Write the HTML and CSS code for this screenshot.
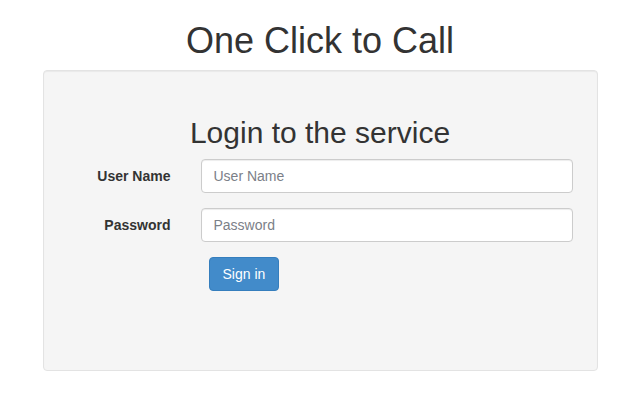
FILE: index.html
```html
<!DOCTYPE html>
<html>
<head>
<meta charset="utf-8">
<title>One Click to Call</title>
<link rel="stylesheet" href="styles.css">
</head>
<body>
<h1 class="title">One Click to Call</h1>
<div class="well">
  <h2 class="subtitle">Login to the service</h2>
  <form class="form">
    <div class="row">
      <label class="label" for="user">User Name</label>
      <input class="input" id="user" type="text" placeholder="User Name">
    </div>
    <div class="row">
      <label class="label" for="pass">Password</label>
      <input class="input" id="pass" type="password" placeholder="Password">
    </div>
    <div class="row row-btn">
      <button class="btn" type="button">Sign in</button>
    </div>
  </form>
</div>
</body>
</html>
```
FILE: styles.css
```css
* { box-sizing: border-box; }
html, body {
  margin: 0;
  padding: 0;
  background: #fff;
  font-family: "Liberation Sans", Arial, sans-serif;
  font-size: 14px;
  color: #333;
}
.title {
  margin: 21px 0 9px;
  font-size: 36px;
  font-weight: 500;
  line-height: 40px;
  text-align: center;
}
.well {
  width: 555px;
  height: 301px;
  margin: 0 auto;
  background: #f5f5f5;
  border: 1px solid #e3e3e3;
  border-radius: 4px;
  box-shadow: inset 0 1px 1px rgba(0,0,0,.05);
  padding: 45px 0 0;
}
.subtitle {
  margin: 0 0 10px;
  font-size: 30px;
  font-weight: 500;
  line-height: 33px;
  text-align: center;
}
.form { margin: 0; }
.row {
  display: flex;
  align-items: flex-start;
  margin-bottom: 15px;
}
.label {
  width: 127px;
  margin-right: 30px;
  padding-top: 7px;
  line-height: 20px;
  font-weight: bold;
  text-align: right;
}
.input {
  width: 372px;
  height: 34px;
  padding: 6px 12px;
  font-family: inherit;
  font-size: 14px;
  line-height: 20px;
  color: #555;
  background: #fff;
  border: 1px solid #ccc;
  border-radius: 4px;
  box-shadow: inset 0 1px 1px rgba(0,0,0,.075);
  outline: none;
}
.input::placeholder { color: #7b8088; }
.row-btn { padding-left: 165px; }
.btn {
  height: 34px;
  padding: 6px 13px;
  font-family: inherit;
  font-size: 14px;
  line-height: 20px;
  color: #fff;
  background: #428bca;
  border: 1px solid #357ebd;
  border-radius: 4px;
  cursor: pointer;
}
```
